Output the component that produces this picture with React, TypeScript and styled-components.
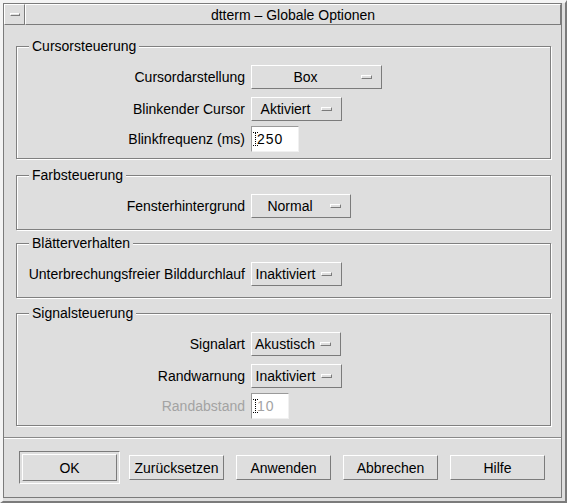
import React from "react";
import styled, { createGlobalStyle } from "styled-components";

const Global = createGlobalStyle`
  html, body { margin: 0; padding: 0; background: #dedede; }
  body { font-family: "Liberation Sans", Arial, sans-serif; font-size: 14px; color: #000; }
`;

const BG = "#dedede";
const DARK = "#7b7b7b";
const LIGHT = "#ffffff";

const Window = styled.div`
  width: 567px;
  height: 503px;
  box-sizing: border-box;
  background: ${BG};
  border-style: solid;
  border-width: 3px 2px 2px 3px;
  border-color: #f4f4f4 ${DARK} ${DARK} #f4f4f4;
  display: flex;
  flex-direction: column;
`;

const Inner = styled.div`
  flex: 1;
  margin: 0 3px 3px 0;
  border: 1px solid ${DARK};
  display: flex;
  flex-direction: column;
  min-height: 0;
`;

const TitleBar = styled.div`
  display: flex;
  height: 21px;
  flex: none;
`;

const Raised = styled.div`
  box-sizing: border-box;
  border-style: solid;
  border-width: 1px;
  border-color: ${LIGHT} ${DARK} ${DARK} ${LIGHT};
`;

const MenuButton = styled(Raised)`
  width: 21px;
  display: flex;
  align-items: center;
  justify-content: center;
`;

const MenuDash = styled.span`
  width: 10px;
  height: 3px;
  box-sizing: border-box;
  border-style: solid;
  border-width: 1px;
  border-color: ${LIGHT} ${DARK} ${DARK} ${LIGHT};
`;

const TitleText = styled(Raised)`
  flex: 1;
  text-align: center;
  line-height: 20px;
  font-size: 14px;
`;

const Content = styled.div`
  flex: 1;
  display: flex;
  flex-direction: column;
  padding: 21px 10px 0 12px;
`;

const Group = styled.div<{ $padBottom: number; $gapTop?: number }>`
  margin-top: ${(p) => p.$gapTop ?? 0}px;
  border: 1px solid #808080;
  box-shadow: inset 1px 1px 0 ${LIGHT}, 1px 1px 0 ${LIGHT};
  padding: 0 0 ${(p) => p.$padBottom}px 0;
`;

const GroupTitle = styled.div`
  margin: -9px 0 0 12px;
  width: fit-content;
  padding: 0 3px;
  background: ${BG};
  line-height: 16px;
  height: 16px;
`;

const Rows = styled.div`
  padding-top: 7px;
  display: flex;
  flex-direction: column;
`;

const Row = styled.div`
  display: flex;
  align-items: center;
  gap: 4px;
`;

const Label = styled.div<{ $disabled?: boolean }>`
  width: 230px;
  box-sizing: border-box;
  padding-right: 2px;
  text-align: right;
  white-space: nowrap;
  color: ${(p) => (p.$disabled ? "#a3a3a3" : "#000")};
`;

const OptionMenu = styled.div<{ $width: number }>`
  width: ${(p) => p.$width}px;
  height: 24px;
  margin: 4px 0 4px;
  box-sizing: border-box;
  border-style: solid;
  border-width: 1px;
  border-color: ${LIGHT} ${DARK} ${DARK} ${LIGHT};
  display: flex;
  align-items: center;
  padding: 0 9px 0 2px;
`;

const OptionText = styled.span`
  flex: 1;
  text-align: center;
  white-space: nowrap;
`;

const Indicator = styled.span`
  width: 11px;
  height: 4px;
  margin-left: 4px;
  box-sizing: border-box;
  border-style: solid;
  border-width: 1px;
  border-color: ${LIGHT} ${DARK} ${DARK} ${LIGHT};
`;

const TextField = styled.div<{ $width: number; $disabled?: boolean }>`
  position: relative;
  width: ${(p) => p.$width}px;
  height: 26px;
  margin: 1px 0 0;
  box-sizing: border-box;
  background: #fff;
  border-style: solid;
  border-width: 1px;
  border-color: #9a9a9a #f0f0f0 #f0f0f0 #9a9a9a;
  display: flex;
  align-items: center;
  padding-left: 5px;
  letter-spacing: 1px;
  color: ${(p) => (p.$disabled ? "#a3a3a3" : "#000")};
`;

const Caret = styled.span`
  position: absolute;
  left: 3px;
  top: 5px;
  width: 4px;
  height: 14px;
  border-left: 1px dotted #000;
  &::before, &::after {
    content: "";
    position: absolute;
    left: -3px;
    width: 5px;
    border-top: 1px dotted #000;
  }
  &::before { top: 0; }
  &::after { bottom: 0; }
`;

const Footer = styled.div`
  flex: none;
  border-top: 1px solid #8a8a8a;
  box-shadow: inset 0 1px 0 ${LIGHT};
  height: 60px;
  box-sizing: border-box;
  display: flex;
  align-items: center;
  padding: 0 0 0 15px;
  gap: 12px;
`;

const DefaultRing = styled.div`
  padding: 2px;
  margin-right: -3px;
  border-style: solid;
  border-width: 1px;
  border-color: ${DARK} ${LIGHT} ${LIGHT} ${DARK};
  display: flex;
`;

const PushButton = styled.button<{ $tall?: boolean }>`
  width: 95px;
  height: ${(p) => (p.$tall ? 27 : 25)}px;
  box-sizing: border-box;
  background: ${BG};
  border-style: solid;
  border-width: 1px;
  border-color: ${LIGHT} ${DARK} ${DARK} ${LIGHT};
  font-family: "Liberation Sans", Arial, sans-serif;
  font-size: 14px;
  color: #000;
  padding: 0;
`;

type Opt = { label: string; value: string; width: number };

function OptionRow({ label, value, width }: Opt) {
  return (
    <Row>
      <Label>{label}</Label>
      <OptionMenu $width={width}>
        <OptionText>{value}</OptionText>
        <Indicator />
      </OptionMenu>
    </Row>
  );
}

function FieldRow({ label, value, width, disabled }: { label: string; value: string; width: number; disabled?: boolean }) {
  return (
    <Row>
      <Label $disabled={disabled}>{label}</Label>
      <TextField $width={width} $disabled={disabled}>
        <Caret />
        {value}
      </TextField>
    </Row>
  );
}

export default function App() {
  return (
    <>
      <Global />
      <Window>
        <Inner>
          <TitleBar>
            <MenuButton>
              <MenuDash />
            </MenuButton>
            <TitleText>dtterm – Globale Optionen</TitleText>
          </TitleBar>
          <Content>
            <Group $padBottom={6}>
              <GroupTitle>Cursorsteuerung</GroupTitle>
              <Rows>
                <OptionRow label="Cursordarstellung" value="Box" width={131} />
                <OptionRow label="Blinkender Cursor" value="Aktiviert" width={91} />
                <FieldRow label="Blinkfrequenz (ms)" value="250" width={48} />
              </Rows>
            </Group>
            <Group $padBottom={7} $gapTop={16}>
              <GroupTitle>Farbsteuerung</GroupTitle>
              <Rows>
                <OptionRow label="Fensterhintergrund" value="Normal" width={100} />
              </Rows>
            </Group>
            <Group $padBottom={7} $gapTop={13}>
              <GroupTitle>Blätterverhalten</GroupTitle>
              <Rows>
                <OptionRow label="Unterbrechungsfreier Bilddurchlauf" value="Inaktiviert" width={91} />
              </Rows>
            </Group>
            <Group $padBottom={6} $gapTop={15}>
              <GroupTitle>Signalsteuerung</GroupTitle>
              <Rows>
                <OptionRow label="Signalart" value="Akustisch" width={90} />
                <OptionRow label="Randwarnung" value="Inaktiviert" width={91} />
                <FieldRow label="Randabstand" value="10" width={38} disabled />
              </Rows>
            </Group>
          </Content>
          <Footer>
            <DefaultRing>
              <PushButton $tall>OK</PushButton>
            </DefaultRing>
            <PushButton>Zurücksetzen</PushButton>
            <PushButton>Anwenden</PushButton>
            <PushButton>Abbrechen</PushButton>
            <PushButton>Hilfe</PushButton>
          </Footer>
        </Inner>
      </Window>
    </>
  );
}
